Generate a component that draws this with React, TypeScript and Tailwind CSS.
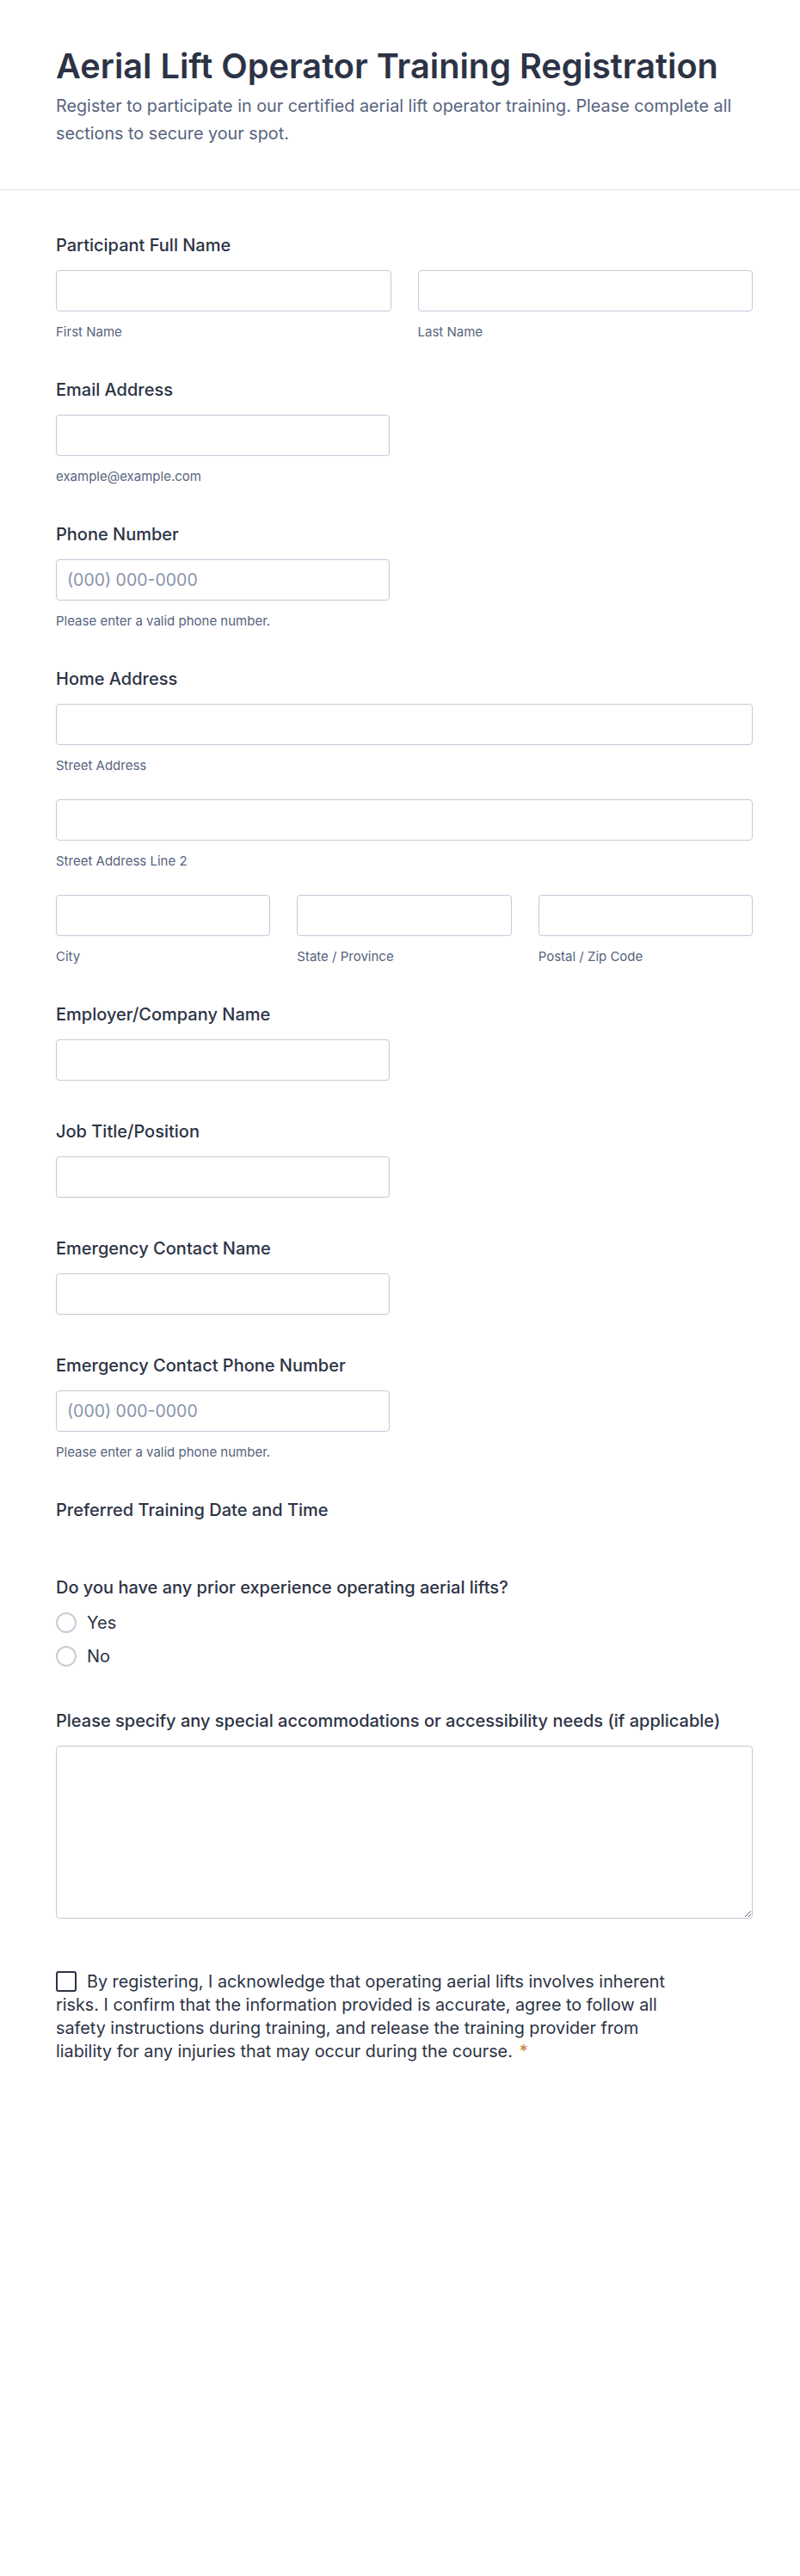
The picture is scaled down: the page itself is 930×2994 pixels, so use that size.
import React from 'react';

const font = { fontFamily: 'Inter, "Noto Sans", sans-serif' };

// preflight resets font on form controls, so size is forced here
const inputCls =
  'block w-full h-12 rounded-[4px]! border border-[#c3cad8] bg-white! px-3 text-[19.5px]! text-[#2c3345]! placeholder:text-[#8894ab] outline-none';

const Input: React.FC<{ placeholder?: string; className?: string }> = ({ placeholder, className = '' }) => (
  <div className={`text-[19.5px] ${className}`}>
    <input className={inputCls} placeholder={placeholder} />
  </div>
);

const Label: React.FC<{ children: React.ReactNode }> = ({ children }) => (
  <label className="block text-[20px] leading-7 font-medium text-[#2c3345] mb-[15px]">{children}</label>
);

const Sub: React.FC<{ children: React.ReactNode }> = ({ children }) => (
  <span className="block mt-3.5 text-[15px] leading-5 text-[#57647e]">{children}</span>
);

const Radio: React.FC<{ label: string }> = ({ label }) => (
  <label className="flex items-center gap-3 h-6">
    <span className="w-6 h-6 rounded-full border-2 border-[#c8cdd8] bg-white shrink-0" />
    <span className="text-[20px] text-[#2c3345]">{label}</span>
  </label>
);

export default function App() {
  return (
    <div className="min-h-[2994px] bg-white" style={font}>
      {/* Header */}
      <div className="px-[65px] pt-[53px] pb-[49px] border-b border-[#dfe3ea]">
        <h1 className="text-[39.7px] leading-[48px] font-semibold text-[#2c3345]">
          Aerial Lift Operator Training Registration
        </h1>
        <p className="mt-[6px] text-[19.8px] leading-8 text-[#57647e]">
          Register to participate in our certified aerial lift operator training. Please complete all
          sections to secure your spot.
        </p>
      </div>

      {/* Form */}
      <div className="px-[65px] pt-[50px]">
        <div className="w-[810px] flex flex-col">
          <div>
            <Label>Participant Full Name</Label>
            <div className="grid grid-cols-2 gap-[31px]">
              <div>
                <Input />
                <Sub>First Name</Sub>
              </div>
              <div>
                <Input />
                <Sub>Last Name</Sub>
              </div>
            </div>
          </div>

          <div className="mt-[43px]">
            <Label>Email Address</Label>
            <div className="w-[388px]">
              <Input />
              <Sub>example@example.com</Sub>
            </div>
          </div>

          <div className="mt-[43px]">
            <Label>Phone Number</Label>
            <div className="w-[388px]">
              <Input placeholder="(000) 000-0000" />
              <Sub>Please enter a valid phone number.</Sub>
            </div>
          </div>

          <div className="mt-[43px]">
            <Label>Home Address</Label>
            <Input />
            <Sub>Street Address</Sub>
            <Input className="mt-[29px]" />
            <Sub>Street Address Line 2</Sub>
            <div className="grid grid-cols-3 gap-[31px] mt-[29px]">
              <div>
                <Input />
                <Sub>City</Sub>
              </div>
              <div>
                <Input />
                <Sub>State / Province</Sub>
              </div>
              <div>
                <Input />
                <Sub>Postal / Zip Code</Sub>
              </div>
            </div>
          </div>

          <div className="mt-[43px]">
            <Label>Employer/Company Name</Label>
            <div className="w-[388px]">
              <Input />
            </div>
          </div>

          <div className="mt-[45px]">
            <Label>Job Title/Position</Label>
            <div className="w-[388px]">
              <Input />
            </div>
          </div>

          <div className="mt-[45px]">
            <Label>Emergency Contact Name</Label>
            <div className="w-[388px]">
              <Input />
            </div>
          </div>

          <div className="mt-[45px]">
            <Label>Emergency Contact Phone Number</Label>
            <div className="w-[388px]">
              <Input placeholder="(000) 000-0000" />
              <Sub>Please enter a valid phone number.</Sub>
            </div>
          </div>

          <div className="mt-[43px]">
            <Label>Preferred Training Date and Time</Label>
            <div className="h-1" />
          </div>

          <div className="mt-[43px]">
            <label className="block text-[20px] leading-7 font-medium text-[#2c3345]">
              Do you have any prior experience operating aerial lifts?
            </label>
            <div className="mt-[15px] flex flex-col gap-[15px]">
              <Radio label="Yes" />
              <Radio label="No" />
            </div>
          </div>

          <div className="mt-[49px]">
            <Label>Please specify any special accommodations or accessibility needs (if applicable)</Label>
            <div className="text-[19.5px]">
              <textarea className="block w-full h-[201px] rounded-[4px]! border border-[#c3cad8] bg-white! px-3 py-2 text-[19.5px]! text-[#2c3345]! outline-none" />
            </div>
          </div>

          <div className="mt-[60px] max-w-[720px]">
            <p className="text-[19.8px] leading-[27px] text-[#2c3345]">
              <span className="inline-block align-middle -mt-1 mr-3 w-6 h-6 rounded-[3px] border-2 border-[#2c3345] bg-white" />
              By registering, I acknowledge that operating aerial lifts involves inherent risks. I confirm that
              the information provided is accurate, agree to follow all safety instructions during training, and
              release the training provider from liability for any injuries that may occur during the course.
              <span className="ml-2 text-[#cc7a3e]">*</span>
            </p>
          </div>
        </div>
      </div>
    </div>
  );
}
